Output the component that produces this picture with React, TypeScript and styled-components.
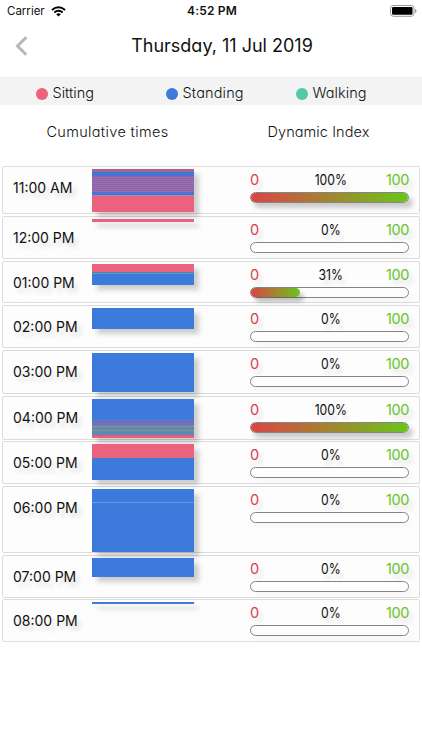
import React from "react";
import styled, { createGlobalStyle } from "styled-components";

const PINK = "#ea627d";
const BLUE = "#3c7adb";
const TEAL = "#55c8aa";

const GlobalStyle = createGlobalStyle`
  * { box-sizing: border-box; }
  body { margin: 0; background: #fff; color: #111; font-family: Inter, "Open Sans", sans-serif; }
`;

const Screen = styled.main`
  width: 422px;
  height: 750px;
  overflow: hidden;
  background: #fff;
`;

const StatusBar = styled.div`
  height: 22px;
  display: grid;
  grid-template-columns: 1fr 60px 1fr;
  align-items: center;
  padding: 0 5px 0 7px;
  font-size: 12px;
  line-height: 22px;
`;

const Carrier = styled.div`
  display: flex;
  align-items: center;
  gap: 6px;
  font-size: 11.5px;
`;

const Clock = styled.div`
  font-weight: 600;
  text-align: center;
  white-space: nowrap;
  letter-spacing: 0.2px;
`;

const BatterySlot = styled.div`
  display: flex;
  justify-content: flex-end;
`;

const Header = styled.header`
  height: 55px;
  display: grid;
  grid-template-columns: 44px 1fr 22px;
  padding-top: 11px;
`;

const BackButton = styled.button`
  display: flex;
  justify-content: flex-start;
  align-items: flex-start;
  border: 0;
  background: none;
  padding: 3px 0 0 15px;
  height: 28px;
`;

const Title = styled.h1`
  margin: 0;
  text-align: center;
  font-size: 18px;
  line-height: 25px;
  font-weight: 400;
  letter-spacing: 0;
  white-space: nowrap;
  font-feature-settings: "cv11";
`;

const Legend = styled.div`
  height: 28px;
  background: #f3f3f3;
  display: grid;
  grid-template-columns: 130px 130px 1fr;
  padding-left: 36px;
`;

const LegendItem = styled.div<{ $spacing: number }>`
  display: flex;
  align-items: center;
  gap: 4.5px;
  font-size: 14.5px;
  font-weight: 300;
  letter-spacing: ${(p) => p.$spacing}px;
  font-feature-settings: "cv11";
  padding-bottom: 2px;
  height: 34px;
  line-height: 34px;
`;

const Dot = styled.span<{ $color: string }>`
  width: 12px;
  height: 12px;
  margin-top: 1px;
  border-radius: 50%;
  background: ${(p) => p.$color};
`;

const Headings = styled.div`
  height: 61px;
  display: grid;
  grid-template-columns: 215px 207px;
  text-align: center;
  padding-top: 16px;
`;

const Heading = styled.h2<{ $spacing: number }>`
  margin: 0;
  font-size: 14.5px;
  font-weight: 300;
  line-height: 22px;
  letter-spacing: ${(p) => p.$spacing}px;
  font-feature-settings: "cv11";
`;

const Rows = styled.div`
  padding: 0 2px;
`;

const Row = styled.section<{ $height: number; $gap: number }>`
  height: ${(p) => p.$height}px;
  margin-bottom: ${(p) => p.$gap}px;
  border: 1px solid #dcdcdc;
  border-radius: 2px;
  display: grid;
  grid-template-columns: 89px 102px 56px 159px;
  align-items: start;
  background: #fdfdfd;
`;

const Time = styled.div`
  padding: 10px 0 0 10px;
  font-size: 14px;
  line-height: 22px;
  white-space: nowrap;
  text-shadow: 4px 5px 4px rgba(0, 0, 0, 0.13);
`;

const Stack = styled.div`
  grid-column: 2;
  margin-top: 2px;
  display: flex;
  flex-direction: column;
  box-shadow: 5px 5px 5px rgba(0, 0, 0, 0.19);
`;

const Segment = styled.div<{ $size: number; $fill: string }>`
  height: ${(p) => p.$size}px;
  background: ${(p) => p.$fill};
`;

const Index = styled.div`
  grid-column: 4;
  padding-top: 2px;
`;

const Scale = styled.div`
  height: 23px;
  display: grid;
  grid-template-columns: 30px 1fr 30px;
  font-size: 14.5px;
  line-height: 22px;
  text-shadow: 4px 5px 4px rgba(0, 0, 0, 0.13);
`;

const Low = styled.span`
  color: #d5434a;
`;

const Percent = styled.span`
  text-align: center;
  padding-left: 3px;
  font-size: 14px;
  color: #111;
  transform: scaleX(0.87);
`;

const High = styled.span`
  color: #69c52a;
  text-align: right;
  letter-spacing: -0.4px;
`;

const Track = styled.div<{ $filled: boolean }>`
  height: 11px;
  border: 1px solid #858585;
  border-radius: 6px;
  box-shadow: 4px 5px 5px rgba(0, 0, 0, ${(p) => (p.$filled ? 0.2 : 0.025)});
`;

const Fill = styled.div<{ $value: number }>`
  width: ${(p) => p.$value}%;
  height: 9px;
  border-radius: 5px;
  background: linear-gradient(90deg, #d94545, #a58231 48%, #69c619);
  box-shadow: ${(p) => (p.$value > 0 && p.$value < 100 ? "4px 5px 4px rgba(0,0,0,0.22)" : "none")};
`;

type Part = [size: number, fill: string];

interface Hour {
  time: string;
  height: number;
  gap: number;
  value: number;
  parts: Part[];
}

const hours: Hour[] = [
  {
    time: "11:00 AM", height: 48, gap: 2, value: 100,
    parts: [
      [2.7, "#a56592"], [4, "#4375d6"],
      [16, "repeating-linear-gradient(180deg, #8c62a5 0 1px, #9a70b4 1px 2px)"],
      [3, "#4775d3"], [1.3, "#a984bf"], [16, PINK],
    ],
  },
  { time: "12:00 PM", height: 43, gap: 2, value: 0, parts: [[3.3, PINK]] },
  {
    time: "01:00 PM", height: 42, gap: 2, value: 31,
    parts: [[7.5, PINK], [1.2, "#6c75ad"], [1.6, "#3bacc3"], [11, BLUE]],
  },
  { time: "02:00 PM", height: 43, gap: 2, value: 0, parts: [[20.5, BLUE]] },
  { time: "03:00 PM", height: 44, gap: 2, value: 0, parts: [[39, BLUE]] },
  {
    time: "04:00 PM", height: 44, gap: 1, value: 100,
    parts: [
      [21, BLUE], [1, "#7e72bc"], [1, "#5371bd"], [1, "#9864a0"], [2, "#557fc0"],
      [1, "#9470a7"], [2, "#6296b3"], [1, "#876a9a"], [2, "#579da8"],
      [1, "#7e7fa1"], [1.5, "#4d8fc1"], [1, "#9874a0"], [1.5, "#c26582"], [1.5, PINK],
    ],
  },
  { time: "05:00 PM", height: 43, gap: 2, value: 0, parts: [[13.7, PINK], [22.6, BLUE]] },
  {
    time: "06:00 PM", height: 67, gap: 2, value: 0,
    parts: [[12.5, BLUE], [1, "#6498e5"], [49, BLUE]],
  },
  { time: "07:00 PM", height: 43, gap: 1, value: 0, parts: [[19, BLUE]] },
  { time: "08:00 PM", height: 43, gap: 0, value: 0, parts: [[2, BLUE]] },
];

const WifiIcon = () => (
  <svg width="15" height="11" viewBox="0 0 15 11" fill="none" stroke="#000" strokeWidth="2">
    <path d="M.9 3.9Q7.5-1.5 14.1 3.9" />
    <path d="M3.3 6.5Q7.5 3 11.7 6.5" />
    <path d="M5.2 8.2Q7.5 6.5 9.8 8.2L7.5 10.6Z" fill="#000" stroke="none" />
  </svg>
);

const BatteryIcon = () => (
  <svg width="27" height="12" viewBox="0 0 27 12">
    <rect x=".5" y=".5" width="23.5" height="10.8" rx="2.8" fill="#fff" stroke="#999" />
    <rect x="2" y="2" width="20.5" height="7.8" rx="1.2" />
    <path d="M25 4v4q1.5-.6 1.5-2T25 4" fill="#999" />
  </svg>
);

const BackIcon = () => (
  <svg width="13" height="20" viewBox="0 0 13 20" fill="none" stroke="#b7b7b7" strokeWidth="3">
    <path d="M11.3 1.2L2.5 10l8.8 8.8" />
  </svg>
);

export default function App() {
  return (
    <Screen>
      <GlobalStyle />
      <StatusBar>
        <Carrier>Carrier <WifiIcon /></Carrier>
        <Clock>4:52 PM</Clock>
        <BatterySlot><BatteryIcon /></BatterySlot>
      </StatusBar>
      <Header>
        <BackButton aria-label="Back"><BackIcon /></BackButton>
        <Title>Thursday, 11 Jul 2019</Title>
      </Header>
      <Legend>
        <LegendItem $spacing={0}><Dot $color={PINK} />Sitting</LegendItem>
        <LegendItem $spacing={0.15}><Dot $color={BLUE} />Standing</LegendItem>
        <LegendItem $spacing={0.05}><Dot $color={TEAL} />Walking</LegendItem>
      </Legend>
      <Headings>
        <Heading $spacing={0.35}>Cumulative times</Heading>
        <Heading $spacing={0.1}>Dynamic Index</Heading>
      </Headings>
      <Rows>
        {hours.map((h) => (
          <Row key={h.time} $height={h.height} $gap={h.gap}>
            <Time>{h.time}</Time>
            <Stack>
              {h.parts.map(([size, fill], i) => <Segment key={i} $size={size} $fill={fill} />)}
            </Stack>
            <Index>
              <Scale>
                <Low>0</Low>
                <Percent>{h.value}%</Percent>
                <High>100</High>
              </Scale>
              <Track $filled={h.value === 100}><Fill $value={h.value} /></Track>
            </Index>
          </Row>
        ))}
      </Rows>
    </Screen>
  );
}
